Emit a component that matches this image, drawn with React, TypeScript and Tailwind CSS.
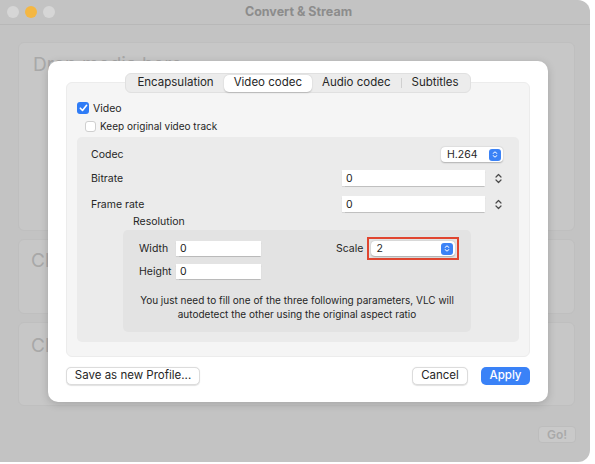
import React from "react";

const FONT = { fontFamily: "Inter, 'Liberation Sans', sans-serif" };

const Stepper = () => (
  <div className="flex flex-col items-center justify-center w-[9px] h-[16px] gap-[1px]">
    <svg width="7" height="5" viewBox="0 0 7 5" fill="none">
      <path d="M1 4L3.5 1.5L6 4" stroke="#4a4a4a" strokeWidth="1.2" strokeLinecap="round" strokeLinejoin="round" />
    </svg>
    <svg width="7" height="5" viewBox="0 0 7 5" fill="none">
      <path d="M1 1L3.5 3.5L6 1" stroke="#4a4a4a" strokeWidth="1.2" strokeLinecap="round" strokeLinejoin="round" />
    </svg>
  </div>
);

const PopupArrows = () => (
  <div className="w-[12px] h-[12px] rounded-[3px] bg-[#3b82f6] flex flex-col items-center justify-center gap-[1px]">
    <svg width="6" height="3" viewBox="0 0 6 3" fill="none">
      <path d="M1 2.5L3 0.8L5 2.5" stroke="white" strokeWidth="1" strokeLinecap="round" strokeLinejoin="round" />
    </svg>
    <svg width="6" height="3" viewBox="0 0 6 3" fill="none">
      <path d="M1 0.5L3 2.2L5 0.5" stroke="white" strokeWidth="1" strokeLinecap="round" strokeLinejoin="round" />
    </svg>
  </div>
);

const Field = ({ value, w, h }: { value: string; w: string; h: string }) => (
  <div className={`${w} ${h} bg-white shadow-[0_0.5px_1px_rgba(0,0,0,0.18)] flex items-center pl-[4px] text-[10.5px] text-[#222]`}>
    {value}
  </div>
);

const Check = ({ on }: { on: boolean }) =>
  on ? (
    <div className="w-[12px] h-[12px] rounded-[3px] bg-[#2f7cf6] flex items-center justify-center">
      <svg width="9" height="8" viewBox="0 0 9 8" fill="none">
        <path d="M1.3 4.2L3.5 6.4L7.6 1.3" stroke="white" strokeWidth="1.6" strokeLinecap="round" strokeLinejoin="round" />
      </svg>
    </div>
  ) : (
    <div className="w-[11px] h-[11px] rounded-[3px] bg-white border border-[#cfcfcf]" />
  );

const TABS = ["Encapsulation", "Video codec", "Audio codec", "Subtitles"];

export default function App() {
  return (
    <div className="w-[595px] h-[464px] bg-white overflow-hidden whitespace-nowrap" style={FONT}>
      {/* background window */}
      <div className="relative w-[590px] h-[462px] bg-[#c3c3c3] rounded-tr-[12px] rounded-br-[12px] flex flex-col">
        <div className="h-[25px] flex items-center border-b border-[#b8b8b8] relative">
          <div className="flex items-center gap-[6px] pl-[7px]">
            <div className="w-[12px] h-[12px] rounded-full bg-[#d6d6d6]" />
            <div className="w-[12px] h-[12px] rounded-full bg-[#f4b743]" />
            <div className="w-[12px] h-[12px] rounded-full bg-[#d6d6d6]" />
          </div>
          <div className="flex-1 text-center pr-[48px] text-[12.5px] font-bold text-[#8c8c8c]">Convert &amp; Stream</div>
        </div>
        <div className="flex flex-col gap-[8px] pl-[18px] pr-[15px] pt-[17px]">
          <div className="h-[189px] rounded-[6px] bg-[#c7c7c7] border border-[#bfbfbf] px-[14px] pt-[8px] text-[19px] text-[#a8a8a8]">
            Drop media here
          </div>
          <div className="h-[75px] rounded-[6px] bg-[#c7c7c7] border border-[#bfbfbf] px-[12px] pt-[7px] text-[19px] text-[#a8a8a8]">
            Choose Profile
          </div>
          <div className="h-[84px] rounded-[6px] bg-[#c7c7c7] border border-[#bfbfbf] px-[12px] pt-[9px] text-[19px] text-[#a8a8a8]">
            Choose Destination
          </div>
        </div>
        <div className="flex justify-end pr-[14px] pt-[20px]">
          <div className="w-[38px] h-[17px] rounded-[4px] bg-[#c9c9c9] border border-[#bdbdbd] flex items-center justify-center text-[12px] font-semibold text-[#a9a9a9]">
            Go!
          </div>
        </div>

        {/* sheet dialog */}
        <div className="absolute left-[48px] top-[61px] w-[500px] h-[341px] bg-white rounded-[10px] shadow-[0_2px_8px_rgba(0,0,0,0.18)] flex flex-col px-[18px] pt-[12px]">
          <div className="flex justify-center relative z-10">
            <div className="flex items-center h-[20px] rounded-[6px] bg-[#ececec] border border-[#e0e0e0] px-[1px] text-[11.5px] text-[#262626]">
              {TABS.map((t, i) => (
                <React.Fragment key={t}>
                  {i === 3 && <div className="w-px h-[10px] bg-[#d0d0d0]" />}
                  <div
                    className={
                      i === 1
                        ? "h-[17px] px-[10px] flex items-center rounded-[5px] bg-white shadow-[0_0.5px_1.5px_rgba(0,0,0,0.2)]"
                        : "h-[17px] px-[10px] flex items-center"
                    }
                  >
                    {t}
                  </div>
                </React.Fragment>
              ))}
            </div>
          </div>

          <div className="-mt-[11px] h-[275px] rounded-[6px] bg-[#f5f5f5] border border-[#ececec] flex flex-col px-[10px] pt-[19px] text-[10.5px] leading-[13px] text-[#262626]">
            <div className="flex items-center gap-[4px] h-[12px]">
              <Check on />
              <span>Video</span>
            </div>
            <div className="flex items-center gap-[4px] h-[12px] mt-[6px] pl-[8px]">
              <Check on={false} />
              <span className="text-[10px]">Keep original video track</span>
            </div>

            <div className="mt-[5px] h-[205px] rounded-[5px] bg-[#ebebeb] flex flex-col pl-[14px] pr-[16px] pt-[10px]">
              <div className="flex items-center justify-between h-[15px]">
                <span>Codec</span>
                <div className="w-[62px] h-[15px] rounded-[4px] bg-white shadow-[0_0.5px_1.5px_rgba(0,0,0,0.25)] flex items-center justify-between pl-[6px] pr-[2px]">
                  <span>H.264</span>
                  <PopupArrows />
                </div>
              </div>
              <div className="flex items-center h-[16px] mt-[8px]">
                <span className="flex-1">Bitrate</span>
                <Field value="0" w="w-[143px]" h="h-[16px]" />
                <div className="w-[18px] flex justify-end">
                  <Stepper />
                </div>
              </div>
              <div className="flex items-center h-[16px] mt-[10px]">
                <span className="flex-1">Frame rate</span>
                <Field value="0" w="w-[143px]" h="h-[16px]" />
                <div className="w-[18px] flex justify-end">
                  <Stepper />
                </div>
              </div>
              <div className="pl-[42px] mt-[3px] h-[13px]">Resolution</div>
              <div className="ml-[32px] mt-[2px] w-[348px] h-[102px] rounded-[5px] bg-[#e3e3e3] flex flex-col pl-[16px] pt-[11px]">
                <div className="flex">
                  <div className="grid grid-cols-[33px_85px] gap-x-[4px] gap-y-[8px] items-center">
                    <span>Width</span>
                    <Field value="0" w="w-[85px]" h="h-[15px]" />
                    <span>Height</span>
                    <Field value="0" w="w-[85px]" h="h-[15px]" />
                  </div>
                  <div className="flex items-start ml-[75px]">
                    <span className="h-[15px] flex items-center mr-[4px]">Scale</span>
                    <div className="-mt-[4px] p-[2px] border-2 border-[#e0452f]">
                      <div className="w-[84px] h-[15px] rounded-[4px] bg-white shadow-[0_0.5px_1.5px_rgba(0,0,0,0.25)] flex items-center justify-between pl-[5px] pr-[2px]">
                        <span>2</span>
                        <PopupArrows />
                      </div>
                    </div>
                  </div>
                </div>
                <div className="mt-[14px] pr-[16px] text-center leading-[14px] text-[10px]">
                  You just need to fill one of the three following parameters, VLC will
                  <br />
                  autodetect the other using the original aspect ratio
                </div>
              </div>
            </div>
          </div>

          <div className="flex items-center mt-[10px] text-[11.5px]">
            <div className="h-[18px] w-[134px] rounded-[5px] bg-white border border-[#dcdcdc] shadow-[0_0.5px_1px_rgba(0,0,0,0.12)] flex items-center justify-center text-[#262626]">
              Save as new Profile...
            </div>
            <div className="flex-1" />
            <div className="h-[18px] w-[56px] rounded-[5px] bg-white border border-[#dcdcdc] shadow-[0_0.5px_1px_rgba(0,0,0,0.12)] flex items-center justify-center text-[#262626]">
              Cancel
            </div>
            <div className="ml-[13px] h-[18px] w-[49px] rounded-[5px] bg-[#3a82f7] flex items-center justify-center text-white font-medium">
              Apply
            </div>
          </div>
        </div>
      </div>
    </div>
  );
}
